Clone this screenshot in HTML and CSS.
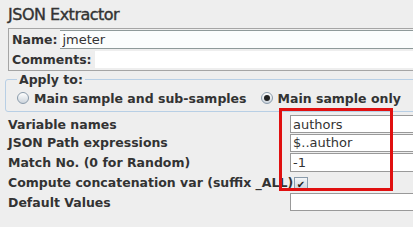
FILE: index.html
```html
<html>
<head>
    <title>JSON Extractor</title>
    <link rel="stylesheet" href="styles.css">
</head>
<body>
    <h1 class="title">JSON Extractor</h1>

    <div class="nameBox">
        <div class="nameRow">
            <span class="label">Name:</span>
            <input class="nameField" type="text" value="jmeter">
        </div>
        <div class="nameRow">
            <span class="label">Comments:</span>
            <input class="commentField" type="text" value="">
        </div>
    </div>

    <fieldset class="applyBox">
        <legend>Apply to:</legend>
        <label class="radio"><span class="radioDot"></span>Main sample and sub-samples</label>
        <label class="radio"><span class="radioDot checked"></span>Main sample only</label>
    </fieldset>

    <div class="form">
        <div class="row r1">
            <span class="label">Variable names</span>
            <input class="field" type="text" value="authors">
        </div>
        <div class="row r2">
            <span class="label">JSON Path expressions</span>
            <input class="field" type="text" value="$..author">
        </div>
        <div class="row r3">
            <span class="label">Match No. (0 for Random)</span>
            <input class="field" type="text" value="-1">
        </div>
        <div class="row r4">
            <span class="label">Compute concatenation var (suffix _ALL)</span>
            <span class="check">&#10004;</span>
        </div>
        <div class="row r5">
            <span class="label">Default Values</span>
            <input class="field" type="text" value="">
        </div>
        <div class="highlight"></div>
    </div>
</body>
</html>
```

FILE: styles.css
```css
body {
    margin: 0px;
    width: 413px;
    height: 227px;
    overflow: hidden;
    background-color: #eeeeee;
    font-family: "DejaVu Sans", sans-serif;
    color: #333333;
}

.title {
    margin: 0px;
    height: 28px;
    padding-left: 8px;
    font-size: 16px;
    font-weight: normal;
    letter-spacing: -0.5px;
    -webkit-text-stroke: 0.4px #333333;
    line-height: 29px;
}

.label {
    font-size: 12.5px;
    font-weight: bold;
    white-space: nowrap;
}

.nameBox {
    margin-left: 8px;
    width: 500px;
    height: 41px;
    border: 1px solid #a5a5a5;
}

.nameRow {
    display: flex;
    align-items: center;
    height: 20px;
    padding-left: 3px;
}

.nameRow .label {
    padding-right: 3px;
}

.nameField {
    width: 400px;
    height: 19px;
    margin: 0px;
    padding: 0px 2px;
    border: none;
    border-top: 1px solid #8f9a9a;
    border-bottom: 1px solid #8f9a9a;
    background-color: #fbfdfd;
    font-family: "DejaVu Sans", sans-serif;
    font-size: 13px;
    color: #333333;
}

.commentField {
    width: 400px;
    height: 17px;
    margin: 0px;
    padding: 0px;
    border: none;
    background-color: #ffffff;
}

.applyBox {
    margin: 1px 0px 0px 5px;
    width: 500px;
    height: 28px;
    padding: 4px 0px 6px 11px;
    border: 1px solid #b8cfe5;
    border-radius: 3px;
    display: flex;
    align-items: center;
    gap: 14px;
}

.applyBox legend {
    padding: 0px 2px;
    margin-left: 0px;
    font-size: 12.5px;
    font-weight: bold;
}

.radio {
    display: flex;
    align-items: center;
    font-size: 12.5px;
    font-weight: bold;
}

.radioDot {
    width: 10px;
    height: 10px;
    margin-right: 5px;
    border: 1px solid #8a9bab;
    border-radius: 50%;
    background: linear-gradient(#ffffff, #ccd4dc);
    position: relative;
}

.radioDot.checked::after {
    content: "";
    position: absolute;
    left: 2px;
    top: 2px;
    width: 6px;
    height: 6px;
    border-radius: 50%;
    background-color: #222222;
}

.form {
    position: relative;
    margin-top: 3px;
    padding-left: 8px;
}

.row {
    display: grid;
    grid-template-columns: 282px 200px;
    align-items: center;
}

.r1 { height: 18px; }
.r2 { height: 19px; }
.r3 { height: 20px; }
.r4 { height: 20px; }
.r5 { height: 20px; }

.field {
    height: 18px;
    margin: 0px;
    padding: 0px 2px;
    border: 1px solid #999999;
    background-color: #ffffff;
    font-family: "DejaVu Sans", sans-serif;
    font-size: 13px;
    color: #333333;
}

.r3 .field {
    height: 19px;
}

.check {
    width: 12px;
    height: 12px;
    margin-left: 4px;
    margin-top: 4px;
    border: 1px solid #8a9bab;
    background: linear-gradient(#f4f6f8, #c8d2dc);
    font-size: 10px;
    line-height: 13px;
    text-align: center;
    color: #222222;
}

.highlight {
    position: absolute;
    left: 279px;
    top: -7px;
    width: 108px;
    height: 77px;
    border: 3px solid #e01010;
}
```
